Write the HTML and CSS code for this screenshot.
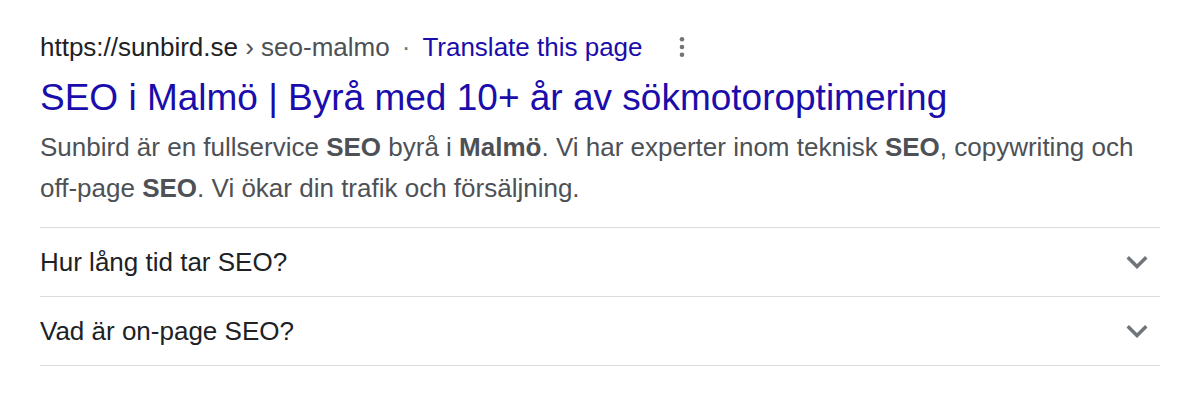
FILE: index.html
```html
<!DOCTYPE html>
<html lang="sv">
<head>
    <meta charset="UTF-8">
    <meta name="viewport" content="width=device-width, initial-scale=1.0">
    <title>SEO i Malmö</title>
    <link rel="stylesheet" href="styles.css">
</head>
<body>
    <div class="result">
        <div class="url-line">
            <span class="domain">https://sunbird.se</span>
            <span class="crumb">&nbsp;›&nbsp;seo-malmo</span>
            <span class="dot">·</span>
            <a class="translate" href="#">Translate this page</a>
            <svg class="more" width="12" height="24" viewBox="0 0 12 24">
                <circle cx="6" cy="4.3" r="2.3" fill="#70757a"/>
                <circle cx="6" cy="12" r="2.3" fill="#70757a"/>
                <circle cx="6" cy="19.7" r="2.3" fill="#70757a"/>
            </svg>
        </div>
        <h3 class="title"><a href="#">SEO i Malmö | Byrå med 10+ år av sökmotoroptimering</a></h3>
        <p class="snippet">Sunbird är en fullservice <b>SEO</b> byrå i <b>Malmö</b>. Vi har experter inom teknisk <b>SEO</b>, copywriting och off-page <b>SEO</b>. Vi ökar din trafik och försäljning.</p>

        <div class="faq">
            <div class="faq-item">
                <span>Hur lång tid tar SEO?</span>
                <svg class="chevron" width="42" height="42" viewBox="0 0 24 24"><path d="M16.59 8.59L12 13.17 7.41 8.59 6 10l6 6 6-6z" fill="#70757a"/></svg>
            </div>
            <div class="faq-item">
                <span>Vad är on-page SEO?</span>
                <svg class="chevron" width="42" height="42" viewBox="0 0 24 24"><path d="M16.59 8.59L12 13.17 7.41 8.59 6 10l6 6 6-6z" fill="#70757a"/></svg>
            </div>
        </div>
    </div>
</body>
</html>
```

FILE: styles.css
```css
body { margin: 0; background: #fff; font-family: "Liberation Sans", Arial, sans-serif; }
a { text-decoration: none; }
.result { width: 1120px; padding: 29px 40px 0; }

.url-line { display: flex; align-items: center; height: 36px; font-size: 26px; white-space: nowrap; }
.domain { color: #202124; }
.crumb { color: #4d5156; }
.dot { color: #70757a; margin: 0 12px; }
.translate { color: #1a0dab; }
.more { margin-left: 33px; }

.title { margin: 9px 0 0; font-size: 37px; line-height: 48px; font-weight: normal; }
.title a { color: #1a0dab; }

.snippet { margin: 5px 0 0; font-size: 26px; line-height: 41px; color: #4d5156; }
.snippet b { color: #4d5156; }

.faq { margin-top: 18px; border-bottom: 1px solid #dadce0; }
.faq-item { display: flex; align-items: center; justify-content: space-between; height: 68px; border-top: 1px solid #dadce0; font-size: 26px; color: #202124; }
.chevron { margin-right: 2px; }
```
